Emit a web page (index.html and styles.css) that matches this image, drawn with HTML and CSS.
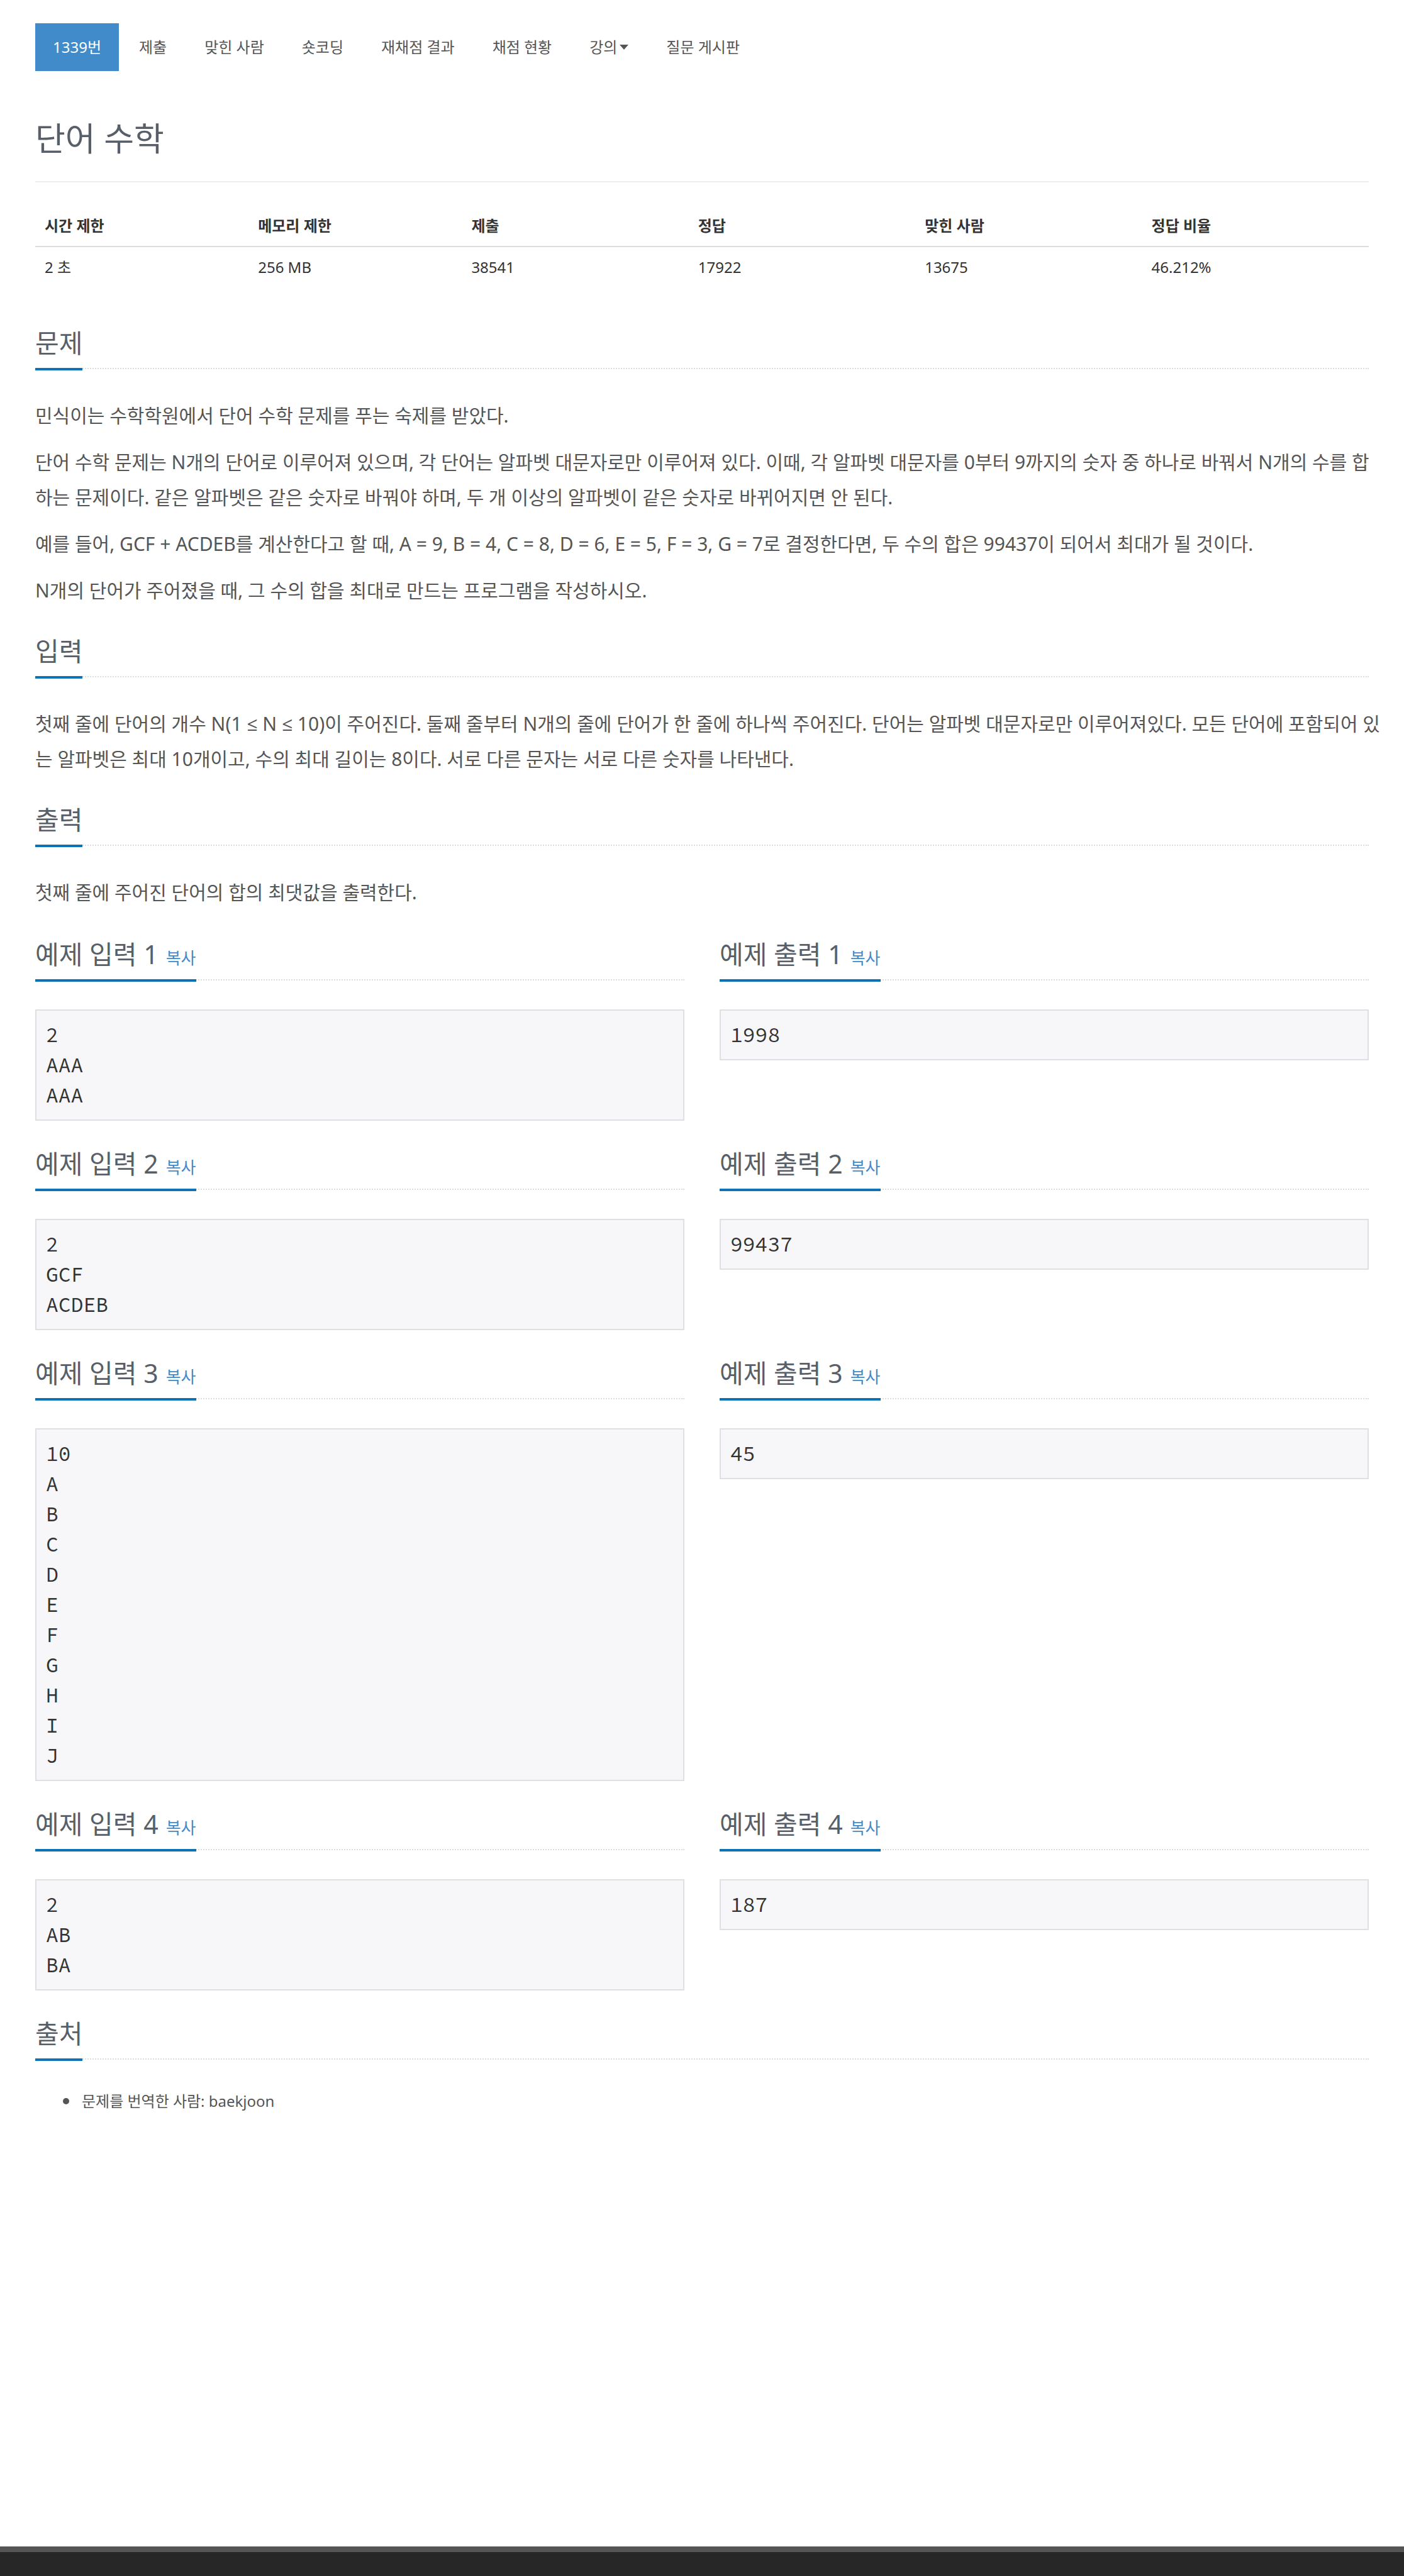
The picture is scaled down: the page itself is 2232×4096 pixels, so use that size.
FILE: index.html
```html
<!DOCTYPE html>
<html lang="ko">
<head>
<meta charset="utf-8">
<title>1339번: 단어 수학</title>
<link rel="stylesheet" href="styles.css">
</head>
<body>
<main class="content">
  <nav>
    <ul class="pills">
      <li><a class="pill pill-active" href="#">1339번</a></li>
      <li><a class="pill" href="#">제출</a></li>
      <li><a class="pill" href="#">맞힌 사람</a></li>
      <li><a class="pill" href="#">숏코딩</a></li>
      <li><a class="pill" href="#">재채점 결과</a></li>
      <li><a class="pill" href="#">채점 현황</a></li>
      <li><a class="pill" href="#">강의<span class="caret"></span></a></li>
      <li><a class="pill" href="#">질문 게시판</a></li>
    </ul>
  </nav>

  <h1 class="title">단어 수학</h1>

  <table class="info">
    <thead>
      <tr>
        <th class="col-limit">시간 제한</th>
        <th class="col-limit">메모리 제한</th>
        <th class="col-stat">제출</th>
        <th class="col-stat">정답</th>
        <th class="col-stat">맞힌 사람</th>
        <th class="col-stat">정답 비율</th>
      </tr>
    </thead>
    <tbody>
      <tr><td>2 초</td><td>256 MB</td><td>38541</td><td>17922</td><td>13675</td><td>46.212%</td></tr>
    </tbody>
  </table>

  <section class="section section-first">
    <div class="headline"><h2>문제</h2></div>
    <div class="prose">
      <p>민식이는 수학학원에서 단어 수학 문제를 푸는 숙제를 받았다.</p>
      <p>단어 수학 문제는 N개의 단어로 이루어져 있으며, 각 단어는 알파벳 대문자로만 이루어져 있다. 이때, 각 알파벳 대문자를 0부터 9까지의 숫자 중 하나로 바꿔서 N개의 수를 합<br>하는 문제이다. 같은 알파벳은 같은 숫자로 바꿔야 하며, 두 개 이상의 알파벳이 같은 숫자로 바뀌어지면 안 된다.</p>
      <p>예를 들어, GCF + ACDEB를 계산한다고 할 때, A = 9, B = 4, C = 8, D = 6, E = 5, F = 3, G = 7로 결정한다면, 두 수의 합은 99437이 되어서 최대가 될 것이다.</p>
      <p>N개의 단어가 주어졌을 때, 그 수의 합을 최대로 만드는 프로그램을 작성하시오.</p>
    </div>
  </section>

  <section class="section">
    <div class="headline"><h2>입력</h2></div>
    <div class="prose">
      <p>첫째 줄에 단어의 개수 N(1 ≤ N ≤ 10)이 주어진다. 둘째 줄부터 N개의 줄에 단어가 한 줄에 하나씩 주어진다. 단어는 알파벳 대문자로만 이루어져있다. 모든 단어에 포함되어 있<br>는 알파벳은 최대 10개이고, 수의 최대 길이는 8이다. 서로 다른 문자는 서로 다른 숫자를 나타낸다.</p>
    </div>
  </section>

  <section class="section">
    <div class="headline"><h2>출력</h2></div>
    <div class="prose">
      <p>첫째 줄에 주어진 단어의 합의 최댓값을 출력한다.</p>
    </div>
  </section>

  <div class="samples">
    <section>
      <div class="headline"><h2>예제 입력 1<button class="copy" type="button">복사</button></h2></div>
      <pre class="data">2
AAA
AAA</pre>
    </section>
    <section>
      <div class="headline"><h2>예제 출력 1<button class="copy" type="button">복사</button></h2></div>
      <pre class="data">1998</pre>
    </section>
    <section>
      <div class="headline"><h2>예제 입력 2<button class="copy" type="button">복사</button></h2></div>
      <pre class="data">2
GCF
ACDEB</pre>
    </section>
    <section>
      <div class="headline"><h2>예제 출력 2<button class="copy" type="button">복사</button></h2></div>
      <pre class="data">99437</pre>
    </section>
    <section>
      <div class="headline"><h2>예제 입력 3<button class="copy" type="button">복사</button></h2></div>
      <pre class="data">10
A
B
C
D
E
F
G
H
I
J</pre>
    </section>
    <section>
      <div class="headline"><h2>예제 출력 3<button class="copy" type="button">복사</button></h2></div>
      <pre class="data">45</pre>
    </section>
    <section>
      <div class="headline"><h2>예제 입력 4<button class="copy" type="button">복사</button></h2></div>
      <pre class="data">2
AB
BA</pre>
    </section>
    <section>
      <div class="headline"><h2>예제 출력 4<button class="copy" type="button">복사</button></h2></div>
      <pre class="data">187</pre>
    </section>
  </div>

  <section class="section">
    <div class="headline"><h2>출처</h2></div>
    <ul class="source">
      <li>문제를 번역한 사람: baekjoon</li>
    </ul>
  </section>
</main>
<footer class="footer"></footer>
</body>
</html>
```
FILE: styles.css
```css
* {
  box-sizing: border-box;
}

body {
  margin: 0;
  min-height: 100vh;
  display: flex;
  flex-direction: column;
  background: #fff;
  color: #333;
  font-family: "Noto Sans", "Open Sans", "Noto Sans CJK KR", sans-serif;
  font-size: 24px;
  line-height: 34px;
}

.content {
  flex: 1;
  padding: 37px 56px 56px;
}

/* Navigation pills */
.pills {
  display: flex;
  flex-wrap: wrap;
  gap: 4px;
  margin: 0;
  padding: 0;
  list-style: none;
}

.pill {
  display: flex;
  align-items: center;
  padding: 19px 28px;
  line-height: 38px;
  color: #555;
  text-decoration: none;
}

.pill-active {
  background: #428bca;
  color: #fff;
}

.caret {
  margin-left: 4px;
  border-top: 8px solid #555;
  border-left: 7px solid transparent;
  border-right: 7px solid transparent;
}

/* Title */
.title {
  margin: 71px 0 0;
  padding-bottom: 32px;
  border-bottom: 2px solid #eee;
  color: #585f69;
  font-size: 52px;
  font-weight: 400;
  line-height: 72px;
}

/* Limits and statistics */
.info {
  width: 100%;
  margin-top: 37px;
  border-collapse: collapse;
  table-layout: fixed;
}

.info th,
.info td {
  padding: 15px;
  text-align: left;
}

.info th {
  border-bottom: 2px solid #ddd;
  font-weight: 700;
}

.col-limit {
  width: 16%;
}

.col-stat {
  width: 17%;
}

/* Sections */
.section {
  margin-top: 38px;
}

.section-first {
  margin-top: 58px;
}

.headline {
  display: flex;
  margin-bottom: 46px;
  border-bottom: 2px dotted #ddd;
}

.headline h2 {
  display: flex;
  align-items: baseline;
  gap: 12px;
  margin: 0 0 -4px;
  padding-bottom: 10px;
  border-bottom: 4px solid #0d73b4;
  color: #585f69;
  font-size: 41px;
  font-weight: 400;
  line-height: 60px;
}

/* Long lines may run slightly into the page gutter */
.prose {
  margin-right: -28px;
  color: #555;
  font-size: 30px;
  line-height: 56px;
}

.prose p {
  margin: 0;
}

.prose p + p {
  margin-top: 18px;
}

/* Sample data */
.samples {
  display: grid;
  grid-template-columns: 1fr 1fr;
  gap: 38px 56px;
  margin-top: 40px;
}

.copy {
  padding: 0;
  border: 0;
  background: none;
  color: #428bca;
  font: inherit;
  font-size: 26px;
  line-height: 34px;
  cursor: pointer;
}

.data {
  margin: 0;
  padding: 15px 15px 14px;
  border: 2px solid #dfe0e3;
  background: #f7f7f9;
  color: #333;
  font-family: "Source Code Pro", "Liberation Mono", monospace;
  font-size: 33px;
  line-height: 48px;
}

/* Source */
.source {
  margin: 0;
  padding-left: 44px;
  color: #555;
  line-height: 40px;
  list-style: none;
}

.source li {
  display: flex;
  align-items: center;
  gap: 20px;
}

.source li::before {
  content: "";
  width: 10px;
  height: 10px;
  border-radius: 50%;
  background: #555;
}

.footer {
  height: 47px;
  border-top: 9px solid #555;
  background: #272727;
}
```
